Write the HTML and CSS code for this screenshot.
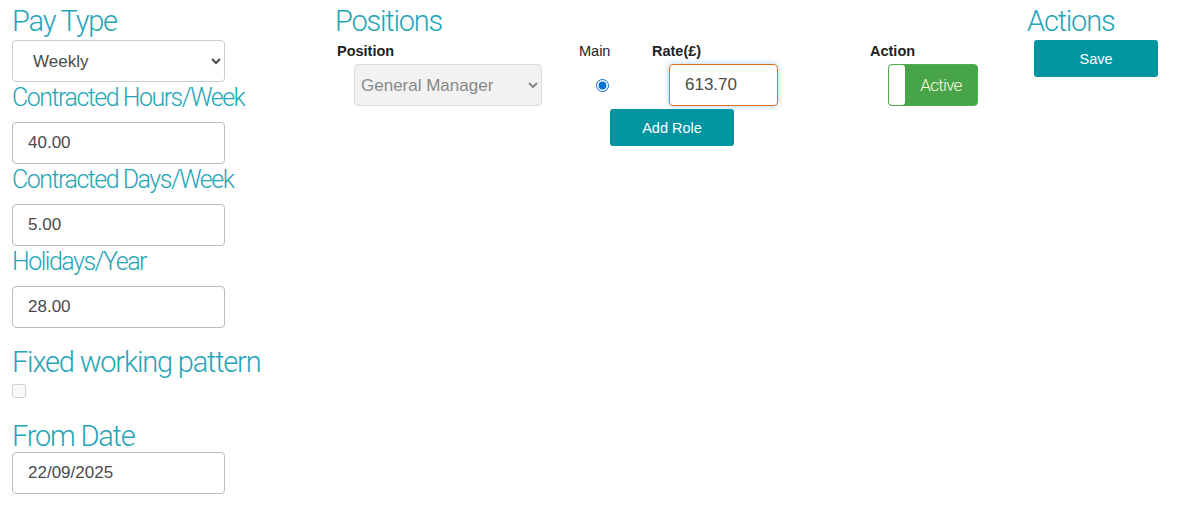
FILE: index.html
```html
<!DOCTYPE html>
<html lang="en">
<head>
  <meta charset="UTF-8" />
  <title>Employee Pay</title>
  <link rel="stylesheet" href="styles.css">
</head>
<body>
  <div class="page">

    <!-- Pay details -->
    <div class="col-pay">
      <h3 class="heading">Pay Type</h3>
      <select class="field field-select">
        <option>Weekly</option>
        <option>Monthly</option>
      </select>

      <label class="sub-label">Contracted Hours/Week</label>
      <input class="field" type="text" value="40.00" />

      <label class="sub-label">Contracted Days/Week</label>
      <input class="field" type="text" value="5.00" />

      <label class="sub-label">Holidays/Year</label>
      <input class="field" type="text" value="28.00" />

      <h3 class="heading heading-fixed">Fixed working pattern</h3>
      <input class="check" type="checkbox" disabled />

      <h3 class="heading heading-date">From Date</h3>
      <input class="field" type="text" value="22/09/2025" />
    </div>

    <!-- Positions -->
    <div class="col-positions">
      <h3 class="heading">Positions</h3>
      <div class="pos-grid">
        <div class="pos-head">Position</div>
        <div class="pos-head pos-head-main">Main</div>
        <div class="pos-head">Rate(£)</div>
        <div class="pos-head">Action</div>

        <div class="pos-cell">
          <select class="field field-select pos-select" disabled>
            <option>General Manager</option>
          </select>
        </div>
        <div class="pos-cell pos-radio">
          <input type="radio" name="main" checked />
        </div>
        <div class="pos-cell">
          <input class="field rate-input" type="text" value="613.70" />
        </div>
        <div class="pos-cell pos-toggle">
          <div class="toggle">
            <span class="toggle-knob"></span>
            <span class="toggle-text">Active</span>
          </div>
        </div>
      </div>
      <button class="btn btn-add">Add Role</button>
    </div>

    <!-- Actions -->
    <div class="col-actions">
      <h3 class="heading">Actions</h3>
      <button class="btn btn-save">Save</button>
    </div>

  </div>
</body>
</html>
```

FILE: styles.css
```css
body {
  margin: 0;
  font-family: "Liberation Sans", Arial, sans-serif;
  color: #333;
  background: #fff;
}

.page {
  display: flex;
  padding: 0 0 0 12px;
}

.heading {
  font-family: Roboto, "Liberation Sans", sans-serif;
  font-weight: 300;
  font-size: 29px;
  letter-spacing: -1.2px;
  line-height: 32px;
  color: #1fa5b6;
  white-space: nowrap;
  margin: 5px 0 3px 0;
}

.sub-label {
  display: block;
  font-family: Roboto, "Liberation Sans", sans-serif;
  font-weight: 300;
  font-size: 25px;
  letter-spacing: -1.5px;
  line-height: 28px;
  color: #1fa5b6;
  white-space: nowrap;
  margin: 2px 0 10px 0;
}

/* Pay column */
.col-pay {
  width: 213px;
  display: flex;
  flex-direction: column;
  align-items: flex-start;
}

.field {
  box-sizing: border-box;
  width: 213px;
  height: 42px;
  padding: 0 15px;
  font-family: "Liberation Sans", Arial, sans-serif;
  font-size: 17px;
  color: #4a4a4a;
  background: #fff;
  border: 1px solid #bbb;
  border-radius: 4px;
  outline: none;
}

.field-select {
  padding-left: 16px;
  border-color: #ccc;
}

.heading-fixed {
  margin-top: 18px;
  margin-bottom: 6px;
}

.check {
  margin: 0 0 22px 0;
  width: 14px;
  height: 14px;
}

.heading-date {
  margin: 0;
}

/* Positions column */
.col-positions {
  margin-left: 110px;
  width: 692px;
}

.pos-grid {
  display: grid;
  grid-template-columns: 242px 73px 218px 1fr;
  margin-left: 2px;
  margin-top: 6px;
}

.pos-head {
  font-size: 14.5px;
  font-weight: bold;
  color: #222;
  height: 21px;
}

.pos-head-main {
  font-weight: normal;
}

.pos-cell {
  padding-left: 17px;
  height: 42px;
  display: flex;
  align-items: center;
}

.pos-select {
  width: 188px;
  color: #888;
  background: #f2f2f2;
  padding-left: 2px;
  border-color: #ddd;
  opacity: 1;
}

.pos-radio input {
  margin: 0;
  width: 13px;
  height: 13px;
  accent-color: #0a6fd6;
}

.rate-input {
  width: 109px;
  border-color: #e36f1e;
  box-shadow: 0 0 6px rgba(102, 175, 233, 0.6);
}

.pos-toggle {
  padding-left: 18px;
}

.toggle {
  display: flex;
  width: 90px;
  height: 42px;
  box-sizing: border-box;
  border: 1px solid #4cae4c;
  border-radius: 4px;
  background: #47a447;
  overflow: hidden;
}

.toggle-knob {
  width: 16px;
  background: #fff;
  border-radius: 3px;
}

.toggle-text {
  flex: 1;
  text-align: center;
  line-height: 40px;
  font-family: Roboto, "Liberation Sans", sans-serif;
  font-weight: 300;
  font-size: 17px;
  letter-spacing: -0.7px;
  color: #fdfde6;
}

.btn {
  display: block;
  width: 124px;
  height: 37px;
  border: none;
  border-radius: 3px;
  background: #0095a1;
  color: #fff;
  font-family: "Liberation Sans", Arial, sans-serif;
  font-size: 14.5px;
  cursor: pointer;
}

.btn-add {
  margin: 3px 0 0 275px;
}

/* Actions column */
.btn-save {
  margin-left: 7px;
  margin-top: 1px;
}
```
